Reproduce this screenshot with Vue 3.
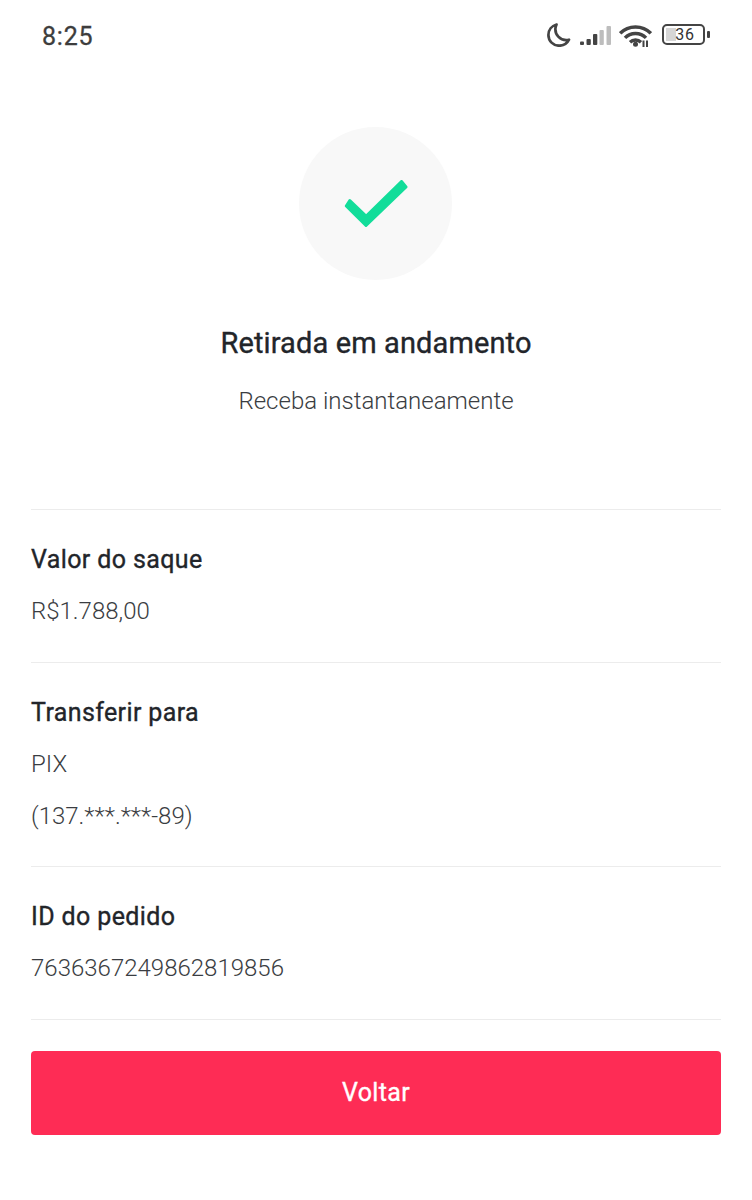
<template>
  <div class="page">
    <div class="status-bar">
      <span class="clock">8:25</span>
      <div class="status-icons">
        <svg class="moon" width="24" height="24" viewBox="0 0 24 24">
          <path d="M9.500 1.500C4.800 2.800 1.400 7 1.400 12c0 6 4.800 10.700 10.800 10.700 4.300 0 8-2.400 9.800-6-1 .3-1.900.4-2.900.4C13 17.100 8 11.700 8.400 5.600c.1-1.400.4-2.800 1.100-4.100z" fill="none" stroke="#444" stroke-width="2.700" stroke-linejoin="round" />
        </svg>
        <svg class="signal" width="31" height="19" viewBox="0 0 31 19">
          <rect x="0" y="15.500" width="4" height="3.500" rx="1" fill="#444" />
          <rect x="6.500" y="13" width="4.300" height="6" rx="1" fill="#444" />
          <rect x="13" y="8" width="4.300" height="11" rx="1" fill="#444" />
          <rect x="19.500" y="4" width="4.300" height="15" rx="1" fill="#bdbdbd" />
          <rect x="26.500" y="0" width="4.500" height="19" rx="1" fill="#bdbdbd" />
        </svg>
        <svg class="wifi" width="33" height="23" viewBox="0 0 33 23">
          <path d="M1.200 9.300C9.500 .8 23.500 .8 31.800 9.300M6 13.800C11.500 8 21.500 8 27 13.800M11 18.200C14 15.300 19 15.300 22 18.200" fill="none" stroke="#444" stroke-width="3.400" />
          <circle cx="16.500" cy="20.300" r="2.500" fill="#444" />
          <path d="M24.500 16.500V23M28 16.500V23" stroke="#444" stroke-width="2" />
        </svg>
        <div class="battery">
          <div class="battery-body">
            <div class="battery-fill"></div>
            <span class="battery-num">36</span>
          </div>
          <div class="battery-tip"></div>
        </div>
      </div>
    </div>

    <div class="hero">
      <div class="check-circle">
        <svg width="64" height="48" viewBox="0 0 64 48">
          <path d="M5.800 20.500L2.300 26L22 45.500L62 7L57.500 1.500L22 36.200Z" fill="#12dd9a" stroke="#12dd9a" stroke-width="3" stroke-linejoin="round" />
        </svg>
      </div>
      <h1 class="hero-title">Retirada em andamento</h1>
      <p class="hero-sub">Receba instantaneamente</p>
    </div>

    <div class="details">
      <section v-for="row in rows" :key="row.label" class="row">
        <h2 class="row-label">{{ row.label }}</h2>
        <p v-for="line in row.lines" :key="line" class="row-value">{{ line }}</p>
      </section>
    </div>

    <button class="back-btn">Voltar</button>
  </div>
</template>

<script setup>
  const rows = [
    { label: 'Valor do saque', lines: ['R$1.788,00'] },
    { label: 'Transferir para', lines: ['PIX', '(137.***.***-89)'] },
    { label: 'ID do pedido', lines: ['7636367249862819856'] }
  ];
</script>

<style scoped>
  .page {
    width: 752px;
    height: 1200px;
    background: #fff;
    font-family: Roboto, "Liberation Sans", sans-serif;
    color: #22252a;
    box-sizing: border-box;
    overflow: hidden;
  }

  /* --- Status bar --- */
  .status-bar {
    height: 70px;
    padding: 0 42px;
    display: flex;
    align-items: center;
    justify-content: space-between;
  }

  .clock {
    font-size: 25px;
    font-weight: 400;
    color: #3d3d3d;
    letter-spacing: 0.8px;
    margin-top: 3px;
    -webkit-text-stroke: 0.3px #3d3d3d;
  }

  .status-icons {
    display: flex;
    align-items: center;
  }

  .moon { margin-right: 9px; }
  .signal { margin-right: 8px; }
  .wifi { margin-right: 10px; margin-top: 1px; }

  .battery {
    display: flex;
    align-items: center;
    gap: 2px;
    margin-top: -2px;
  }

  .battery-body {
    position: relative;
    width: 43px;
    height: 21px;
    box-sizing: border-box;
    border: 2px solid #444;
    border-radius: 5px;
    display: flex;
    align-items: center;
    justify-content: center;
  }

  .battery-fill {
    position: absolute;
    left: 2px;
    top: 2px;
    bottom: 2px;
    width: 10px;
    background: #d6d6d6;
  }

  .battery-num {
    position: relative;
    margin-left: 3px;
    font-size: 16px;
    color: #333;
    letter-spacing: 0.8px;
  }

  .battery-tip {
    width: 3px;
    height: 7px;
    background: #444;
    border-radius: 1px;
  }

  /* --- Hero --- */
  .hero {
    display: flex;
    flex-direction: column;
    align-items: center;
    padding-top: 57px;
    height: 439px;
    box-sizing: border-box;
  }

  .check-circle {
    width: 153px;
    height: 153px;
    margin-left: -1px;
    border-radius: 50%;
    background: #f8f8f8;
    display: flex;
    align-items: center;
    justify-content: center;
  }

  .hero-title {
    margin: 45px 0 0;
    font-size: 29px;
    line-height: 36px;
    font-weight: 400;
    letter-spacing: 0.12px;
    -webkit-text-stroke: 0.35px #22252a;
  }

  .hero-sub {
    margin: 22px 0 0;
    font-size: 24px;
    line-height: 36px;
    font-weight: 300;
    color: #3a3d42;
  }

  /* --- Detail rows --- */
  .details {
    margin: 0 31px;
    border-top: 1px solid #ececec;
  }

  .row {
    border-bottom: 1px solid #ececec;
    padding: 32px 0 32.6px;
    display: flex;
    flex-direction: column;
    gap: 16px;
  }

  .row-label {
    margin: 0 0 -1px;
    font-size: 25px;
    line-height: 36px;
    font-weight: 400;
    letter-spacing: 0.38px;
    -webkit-text-stroke: 0.35px #22252a;
  }

  .row-value {
    margin: 0;
    font-size: 24px;
    line-height: 36px;
    font-weight: 300;
    color: #3a3d42;
  }

  /* --- Button --- */
  .back-btn {
    display: block;
    width: 690px;
    height: 84px;
    margin: 31px 0 0 31px;
    border: none;
    border-radius: 4px;
    background: #fe2c55;
    color: #fff;
    font-family: inherit;
    font-size: 25px;
    font-weight: 400;
    letter-spacing: 0.35px;
    -webkit-text-stroke: 0.35px #fff;
  }
</style>
